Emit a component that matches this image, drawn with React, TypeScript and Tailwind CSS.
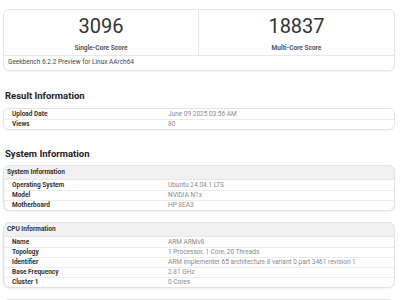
import React from 'react';

const font = { fontFamily: 'Roboto, "Liberation Sans", sans-serif' };

type Row = [string, string];

function InfoRows({ rows }: { rows: Row[] }) {
    return (
        <div className="ml-[1px] bg-white rounded-b-md">
            {rows.map(([label, value], i) => (
                <div
                    key={label}
                    className={`flex items-center h-[10px] text-[6.5px] leading-none ${i > 0 ? 'border-t border-[#ececec]' : ''}`}
                >
                    <div className="w-[163px] pl-[7px] font-bold text-[#333]">{label}</div>
                    <div className="text-[#8a8a8a]">{value}</div>
                </div>
            ))}
        </div>
    );
}

function InfoCard({ title, rows }: { title: string; rows: Row[] }) {
    return (
        <div className="rounded-md border border-[#e3e3e3] bg-[#f1f1f1] overflow-hidden shadow-[0_1px_2px_rgba(0,0,0,0.05)]">
            <div className="h-[14px] flex items-center pl-[3px] text-[6.5px] font-bold text-[#333] border-b border-[#e6e6e6]">
                {title}
            </div>
            <InfoRows rows={rows} />
        </div>
    );
}

export default function App() {
    return (
        <div className="w-[400px] h-[300px] overflow-hidden bg-white pl-[3px] pr-[5px] pt-[9px]" style={font}>
            {/* Scores */}
            <div className="rounded-md border border-[#e5e5e5] shadow-[0_1px_2px_rgba(0,0,0,0.06)]">
                <div className="grid grid-cols-2 h-[45px]">
                    <div className="flex flex-col items-center border-r border-[#e8e8e8]">
                        <div className="text-[20px] leading-none mt-[6px] text-[#333]">3096</div>
                        <div className="text-[6.5px] font-bold mt-[8px] text-[#555]">Single-Core Score</div>
                    </div>
                    <div className="flex flex-col items-center">
                        <div className="text-[20px] leading-none mt-[6px] text-[#333]">18837</div>
                        <div className="text-[6.5px] font-bold mt-[8px] text-[#555]">Multi-Core Score</div>
                    </div>
                </div>
                <div className="h-[15px] border-t border-[#e8e8e8] flex items-center px-[4px] text-[6.5px] text-[#444]">
                    Geekbench 6.2.2 Preview for Linux AArch64
                </div>
            </div>

            <h2 className="mt-[19px] mb-[6px] text-[9.5px] leading-[12px] font-bold text-[#222] pl-[2px]">Result Information</h2>
            <div className="rounded-md border border-[#e3e3e3] overflow-hidden shadow-[0_1px_2px_rgba(0,0,0,0.05)]">
                <InfoRows rows={[['Upload Date', 'June 09 2025 03:56 AM'], ['Views', '80']]} />
            </div>

            <h2 className="mt-[18px] mb-[5px] text-[9.5px] leading-[12px] font-bold text-[#222] pl-[2px]">System Information</h2>
            <InfoCard
                title="System Information"
                rows={[
                    ['Operating System', 'Ubuntu 24.04.1 LTS'],
                    ['Model', 'NVIDIA N1x'],
                    ['Motherboard', 'HP 8EA3'],
                ]}
            />

            <div className="mt-[11px]">
                <InfoCard
                    title="CPU Information"
                    rows={[
                        ['Name', 'ARM ARMv8'],
                        ['Topology', '1 Processor, 1 Core, 20 Threads'],
                        ['Identifier', 'ARM implementer 65 architecture 8 variant 0 part 3461 revision 1'],
                        ['Base Frequency', '2.81 GHz'],
                        ['Cluster 1', '0 Cores'],
                    ]}
                />
            </div>

            {/* next card, only its top edge is in view */}
            <div className="mt-[11px] h-[20px] rounded-md border border-[#e3e3e3] bg-[#f1f1f1]" />
        </div>
    );
}
